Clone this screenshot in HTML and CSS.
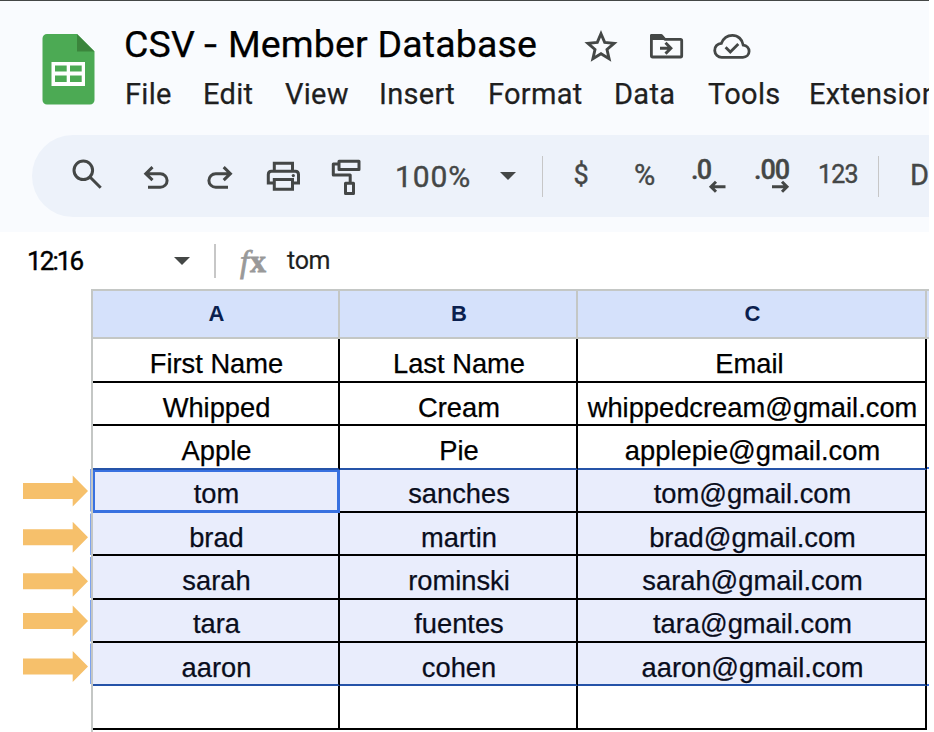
FILE: index.html
```
<!DOCTYPE html>
<html lang="en">
<head>
<meta charset="utf-8">
<title>CSV - Member Database</title>
<link rel="stylesheet" href="styles.css">
</head>
<body>
<div class="app">
  <header class="header">
    <svg class="logo" viewBox="42 34 53 71">
      <path d="M47 34h30l17.500 17.500V100a4.500 4.500 0 0 1-4.500 4.500H47a4.500 4.500 0 0 1-4.500-4.500V38.500A4.500 4.500 0 0 1 47 34z" fill="#4caa54"/>
      <path d="M77 34l17.500 17.500H77z" fill="#3b853c"/>
      <path fill="#fff" fill-rule="evenodd" d="M51.500 62H85v24H51.500zM55 65.500v6h11.700v-6zM70 65.500v6h11.700v-6zM55 75.500v6.500h11.700v-6.500zM70 75.500v6.500h11.700v-6.500z"/>
    </svg>
    <div class="heading">
      <div class="title-row">
        <h1 class="title">CSV <span class="dash">-</span> Member Database</h1>
        <svg class="title-icons" viewBox="580 26 180 40">
          <path fill="none" stroke="#444746" stroke-width="2.900" d="M601 33.700l3.700 8.700 9.400.9-7.100 6.200 2.100 9.200-8.100-4.900-8.100 4.900 2.100-9.200-7.100-6.200 9.400-.9z"/>
          <path fill="none" stroke="#444746" stroke-width="2.800" stroke-linejoin="round" d="M651.400 35.400h10l3.500 4h15.600q1.200 0 1.200 1.200v15.200q0 1.200-1.200 1.200h-27.900q-1.200 0-1.200-1.200z"/>
          <path fill="#444746" d="M651 35h10.500l4 5H651z"/>
          <path fill="none" stroke="#444746" stroke-width="2.900" d="M660 48.200h10M665.500 42.800l5.400 5.400-5.400 5.400"/>
          <path fill="none" stroke="#444746" stroke-width="2.800" d="M722 57.300a7 7 0 0 1-.6-14c1.800-4.500 5.800-7.900 11-7.900 5.700 0 10 4.100 10.800 9.700 3.600.4 5.900 3 5.900 6.200 0 3.500-2.700 6-6.200 6z"/>
          <path fill="none" stroke="#444746" stroke-width="2.800" d="M725.600 47.200l4.700 4.700 8-8"/>
        </svg>
      </div>
      <nav class="menu">
        <span>File</span><span>Edit</span><span>View</span><span>Insert</span><span>Format</span><span>Data</span><span>Tools</span><span>Extensions</span>
      </nav>
    </div>
  </header>

  <div class="toolbar">
    <svg class="tool" width="70" viewBox="52 135 70 82"><g class="line"><circle cx="83.300" cy="170.300" r="9.300"/><path d="M89.700 176.700l11 11"/></g></svg>
    <svg class="tool" width="66" viewBox="122 135 66 82"><g class="line"><path d="M148 187.300h12.300a6.800 6.800 0 0 0 0-13.600H146M152.500 167.200l-6.700 6.500 6.700 6.500"/></g></svg>
    <svg class="tool" width="64" viewBox="188 135 64 82"><g class="line"><path d="M228 187.300h-12.300a6.800 6.800 0 0 1 0-13.600H230M223.700 167.200l6.700 6.500-6.700 6.500"/></g></svg>
    <svg class="tool" width="63" viewBox="252 135 63 82"><g class="line"><path d="M274.300 171v-7.800h18.200v7.800M274.300 183h-6v-8.500q0-3.200 3.200-3.200h23.800q3.200 0 3.200 3.200v8.500h-6M274.300 179.500h18.200v9.800h-18.200z"/></g><circle cx="293.300" cy="175.600" r="1.600" fill="#444746"/></svg>
    <svg class="tool" width="62" viewBox="315 135 62 82"><g class="line" stroke-linejoin="round"><path d="M339 161.200h20v8.300h-20zM338.500 164h-5.200v11h16.900v8M345.500 183.200h8v10.300h-8z"/></g></svg>
    <span class="zoom">100%</span>
    <span class="caret-box"><i class="caret"></i></span>
    <span class="divider-box"><i class="divider"></i></span>
    <span class="dollar">$</span>
    <span class="percent">%</span>
    <svg class="tool" width="50" viewBox="684 135 50 82"><text class="dec" x="691" y="178.500" textLength="21">.0</text><path class="line" d="M725.500 186.700H711M716 181.700l-5 5 5 5"/></svg>
    <svg class="tool" width="76" viewBox="734 135 76 82"><text class="dec" x="754" y="178.500" textLength="36">.00</text><path class="line" d="M772 186.700h14.500M782 181.700l5 5-5 5"/></svg>
    <span class="number">123</span>
    <span class="divider-box"><i class="divider"></i></span>
    <span class="font-name">D</span>
  </div>

  <div class="formula">
    <span class="range">12:16</span>
    <i class="caret"></i>
    <i class="divider"></i>
    <span class="fx"><span class="f">f</span><span class="x">x</span></span>
    <span class="value">tom</span>
  </div>

  <div class="sheet">
    <svg class="gutter" viewBox="0 290 91 442">
      <defs><path id="arrow" fill="#f6c06b" d="M23-8h49.700v-7.500L88 0 72.700 15.500V8H23z"/></defs>
      <use href="#arrow" y="491"/><use href="#arrow" y="537.300"/><use href="#arrow" y="581.300"/><use href="#arrow" y="621"/><use href="#arrow" y="666.500"/>
      <path d="M90.500 469v42.500M90.500 513.500V555M90.500 557v41M90.500 600v41.500M90.500 643.500V684" stroke="#7da2ee"/>
    </svg>
    <div class="grid">
      <div class="col">A</div><div class="col">B</div><div class="col">C</div>
      <div class="cell">First Name</div><div class="cell">Last Name</div><div class="cell heading-email">Email</div>
      <div class="cell">Whipped</div><div class="cell">Cream</div><div class="cell">whippedcream@gmail.com</div>
      <div class="cell edge">Apple</div><div class="cell edge">Pie</div><div class="cell edge">applepie@gmail.com</div>
      <div class="cell sel active">tom</div><div class="cell sel">sanches</div><div class="cell sel">tom@gmail.com</div>
      <div class="cell sel">brad</div><div class="cell sel">martin</div><div class="cell sel">brad@gmail.com</div>
      <div class="cell sel">sarah</div><div class="cell sel">rominski</div><div class="cell sel">sarah@gmail.com</div>
      <div class="cell sel">tara</div><div class="cell sel">fuentes</div><div class="cell sel">tara@gmail.com</div>
      <div class="cell sel edge">aaron</div><div class="cell sel edge">cohen</div><div class="cell sel edge">aaron@gmail.com</div>
      <div class="cell"></div><div class="cell"></div><div class="cell"></div>
    </div>
    <div class="next-col"><div class="next-head"></div><div class="next-top"></div><div class="next-sel"></div></div>
  </div>
</div>
</body>
</html>
```
FILE: styles.css
```
* { box-sizing: border-box; }
body { margin: 0; background: #fff; overflow: hidden; font-family: Roboto, "Liberation Sans", sans-serif; }
svg { display: block; flex: none; }
.app { width: 929px; height: 732px; overflow: hidden; background: #fff; }

.header { display: flex; height: 135px; padding-left: 42px; background: #f9fbfe; border-top: 1px solid #444746; }
.logo { width: 53px; height: 71px; margin-top: 33px; }
.heading { margin-left: 29px; }
.title-row { display: flex; height: 68px; padding-top: 18px; }
.title { width: 456px; margin: 0; font-size: 37.5px; line-height: 50px; font-weight: 400; letter-spacing: 0.15px; color: #000; white-space: nowrap; -webkit-text-stroke: 0.25px #000; }
.dash { display: inline-block; width: 14px; transform: scaleX(1.25); transform-origin: left; }
.title-icons { width: 180px; height: 40px; margin-top: 7px; }
.menu { display: grid; grid-template-columns: 78px 82px 94px 109px 126px 94px 101px 130px; padding-left: 1px; font-size: 29px; line-height: 50px; color: #1f1f1f; letter-spacing: 0.3px; -webkit-text-stroke: 0.25px #1f1f1f; }

.toolbar { display: flex; align-items: center; height: 82px; padding-left: 20px; margin-left: 32px; border-radius: 41px 0 0 41px; background: #edf2fa; color: #444746; box-shadow: 0 0 0 60px #f9fbfe; clip-path: inset(0 0 -15px -32px); }
.tool { height: 82px; }
.line { fill: none; stroke: #444746; stroke-width: 3px; }
.dec { font: 500 27px Roboto, sans-serif; fill: #444746; stroke: #444746; stroke-width: 0.4px; }
.toolbar span { flex: none; text-align: center; white-space: nowrap; -webkit-text-stroke: 0.4px #444746; }
.toolbar .zoom { width: 112px; font-size: 30px; letter-spacing: 0.9px; }
.toolbar .caret-box { display: flex; justify-content: center; width: 38px; }
.caret { width: 0; height: 0; border: 8px solid transparent; border-top: 8px solid #444746; border-bottom: 0; }
.toolbar .divider-box { display: flex; justify-content: center; width: 30px; }
.divider { width: 1px; height: 41px; background: #c7c7c7; }
.toolbar .dollar { width: 48px; font-size: 27px; margin-top: -2px; }
.toolbar .percent { width: 79px; font-size: 29px; margin-top: -2px; }
.toolbar .number { width: 56px; font-size: 25px; letter-spacing: -0.8px; margin-top: -3px; }
.toolbar .number + .divider-box { width: 24px; }
.toolbar .font-name { padding-left: 20px; font-size: 29px; margin-top: -3px; }

.formula { display: flex; align-items: center; height: 57px; margin-top: 15px; padding-left: 27px; color: #000; font-size: 26px; white-space: nowrap; }
.range { width: 147px; letter-spacing: -1.9px; -webkit-text-stroke: 0.4px #000; }
.formula .divider { width: 2px; height: 34px; margin-left: 24px; }
.fx { display: flex; width: 49px; margin-left: 24px; color: #999; font-family: "Liberation Serif", serif; font-weight: 700; line-height: 32px; -webkit-text-stroke: 0.8px #999; }
.f { font-size: 32px; font-style: italic; font-weight: 400; }
.x { font-size: 32px; margin-left: 1px; }
.value { margin-left: -2px; font-size: 25px; letter-spacing: -0.3px; color: #1f1f1f; -webkit-text-stroke: 0.2px #1f1f1f; }

.sheet { display: flex; height: 443px; }
.gutter { width: 91px; height: 442px; margin-top: 1px; }
.grid { display: grid; flex: none; grid-template-columns: 247px 238px 349px; grid-template-rows: 50px 44px repeat(8, 43.33px); border-left: 2px solid #c4c7c5; width: 836px; height: 443px; }
.col { display: flex; align-items: center; justify-content: center; padding-left: 2px; border: solid #c4c7c5; border-width: 2px 2px 2px 0; background: #d5e1fb; color: #0b1f4f; font: 700 22px "Liberation Sans", sans-serif; }
.cell { display: flex; align-items: center; justify-content: center; padding: 8px 0 0 2px; border: solid #000; border-width: 0 2px 2px 0; color: #000; font: 27.300px/30px "Liberation Sans", sans-serif; white-space: nowrap; -webkit-text-stroke: 0.25px; }
.heading-email { padding-right: 6px; }
.sel { background: #e9edfc; color: #0a0d1c; }
.edge { border-bottom-color: #2553a8; }
.active { border-color: #3871e0; box-shadow: inset 2px 2px #3871e0, inset -1px -1px #3871e0; }
.next-col { width: 2px; }
.next-head { height: 50px; border: solid #c4c7c5; border-width: 2px 0; background: #d5e1fb; }
.next-top { height: 130px; border-bottom: 2px solid #3871e0; }
.next-sel { height: 217px; border-bottom: 2px solid #3871e0; }
```
